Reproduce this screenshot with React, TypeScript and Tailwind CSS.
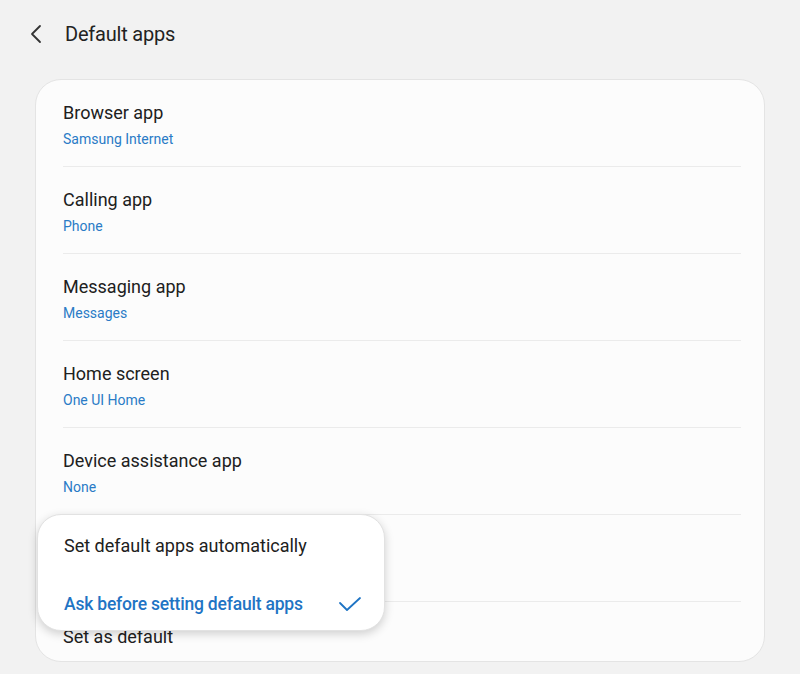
import React from 'react';

interface Row {
  title: string;
  value?: string;
}

const rows: Row[] = [
  { title: 'Browser app', value: 'Samsung Internet' },
  { title: 'Calling app', value: 'Phone' },
  { title: 'Messaging app', value: 'Messages' },
  { title: 'Home screen', value: 'One UI Home' },
  { title: 'Device assistance app', value: 'None' },
];

const font = { fontFamily: 'Roboto, "Noto Sans", sans-serif' };

export default function App() {
  return (
    <div className="relative w-[800px] h-[674px] bg-[#f2f2f2] overflow-hidden" style={font}>
      {/* Header */}
      <div className="flex items-center h-[68px] pl-[29px]">
        <svg className="w-[16px] h-[20px]" viewBox="0 0 16 20" fill="none">
          <path d="M11 2 L3 10 L11 18" stroke="#333" strokeWidth="1.8" strokeLinecap="round" strokeLinejoin="round" />
        </svg>
        <h1 className="ml-[20px] text-[20px] text-[#222] tracking-[-0.2px]">Default apps</h1>
      </div>

      {/* Card */}
      <div className="mx-[35px] mt-[11px] h-[583px] rounded-[26px] bg-[#fcfcfc] border border-[#e4e4e4] overflow-hidden">
        {rows.map((row) => (
          <div key={row.title} className="ml-[27px] mr-[23px] h-[87px] border-b border-[#ebebeb] flex flex-col pt-[21px]">
            <span className="text-[18px] leading-[24px] text-[#202020]">{row.title}</span>
            {row.value && (
              <span className="text-[14px] leading-[22px] mt-[3px] text-[#2a7bc6]">{row.value}</span>
            )}
          </div>
        ))}
        {/* row hidden behind the popup */}
        <div className="ml-[27px] mr-[23px] h-[87px] border-b border-[#ebebeb]" />
        <div className="ml-[27px] pt-[23px]">
          <span className="text-[18px] leading-[24px] text-[#202020]">Set as default</span>
        </div>
      </div>

      {/* Popup menu */}
      <div className="absolute left-[37px] top-[514px] w-[348px] h-[117px] rounded-[24px] bg-white border border-[#e2e2e2] shadow-[0_3px_10px_rgba(0,0,0,0.18)] flex flex-col">
        <div className="flex items-center h-[60px] pt-[2px] pl-[26px] text-[18px] text-[#202020]">
          Set default apps automatically
        </div>
        <div className="flex items-center justify-between h-[56px] pt-[4px] pl-[26px] pr-[22px] text-[17.5px] font-medium text-[#1f74c4] tracking-[-0.2px]">
          <span>Ask before setting default apps</span>
          <svg className="w-[24px] h-[16px]" viewBox="0 0 24 16" fill="none">
            <path d="M2 7 L9 14 L22 2" stroke="#1f74c4" strokeWidth="1.8" strokeLinecap="round" strokeLinejoin="round" />
          </svg>
        </div>
      </div>
    </div>
  );
}
